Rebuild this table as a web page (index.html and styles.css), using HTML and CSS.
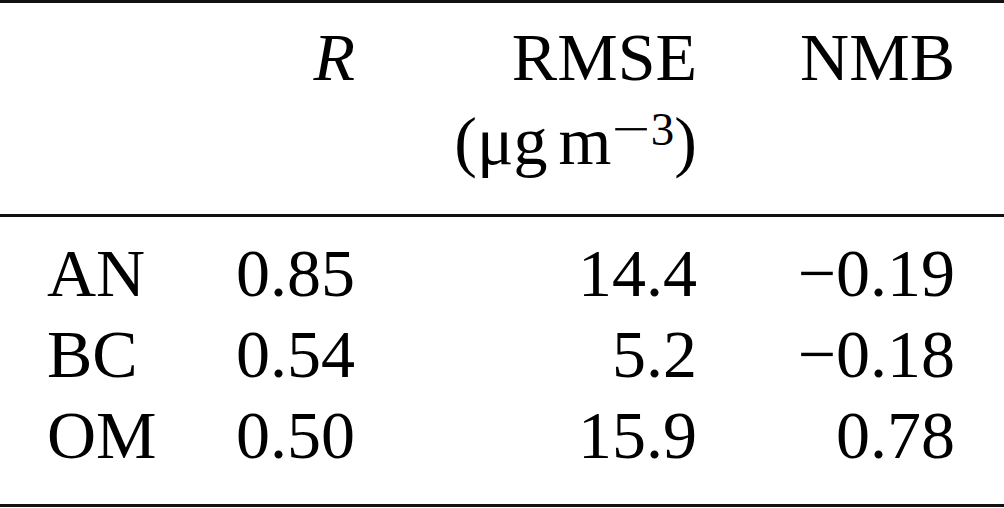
FILE: index.html
```html
<!DOCTYPE html>
<html lang="en">
<head>
    <meta charset="UTF-8">
    <meta name="viewport" content="width=device-width, initial-scale=1.0">
    <title>Evaluation statistics</title>
    <link rel="stylesheet" href="styles.css">
</head>
<body>

    <table class="stats">
        <colgroup>
            <col class="c-name">
            <col class="c-r">
            <col class="c-rmse">
            <col class="c-nmb">
        </colgroup>
        <!-- header: two lines, units under RMSE -->
        <thead>
            <tr>
                <th class="name"></th>
                <th class="num"><i>R</i></th>
                <th class="num">RMSE<br>(μg<span class="unit-gap"> </span>m<sup><span class="sup-minus">−</span>3</sup>)</th>
                <th class="num last-col">NMB</th>
            </tr>
        </thead>
        <tbody>
            <tr class="first">
                <td class="name">AN</td>
                <td class="num">0.85</td>
                <td class="num">14.4</td>
                <td class="num last-col">−0.19</td>
            </tr>
            <tr>
                <td class="name">BC</td>
                <td class="num">0.54</td>
                <td class="num">5.2</td>
                <td class="num last-col">−0.18</td>
            </tr>
            <tr class="last">
                <td class="name">OM</td>
                <td class="num">0.50</td>
                <td class="num">15.9</td>
                <td class="num last-col">0.78</td>
            </tr>
        </tbody>
    </table>

</body>
</html>
```

FILE: styles.css
```css
/* booktabs style table, Times metrics */
body { margin: 0; background: #fff; }

.stats {
    width: 1004px;
    table-layout: fixed;
    border-collapse: collapse;
    font-family: "Liberation Serif", "Times New Roman", serif;
    font-size: 68px;
    color: #000;
}
.c-name { width: 200px; }
.c-r { width: 155px; }
.c-rmse { width: 342px; }
.c-nmb { width: 307px; }

.stats th, .stats td { box-sizing: border-box; padding: 0; font-weight: normal; white-space: nowrap; }
.stats .name { text-align: left; padding-left: 47px; }
.stats .num { text-align: right; }
.stats .last-col { padding-right: 49px; }

/* rules */
.stats thead { border-top: 3px solid #111; border-bottom: 3px solid #111; }
.stats tbody { border-bottom: 3px solid #111; }

.stats thead th { line-height: 84px; padding-top: 12px; padding-bottom: 31px; vertical-align: top; }
.stats tbody td { line-height: 81px; }
.stats tr.first td { padding-top: 16px; }
.stats tr.last td { padding-bottom: 28px; }

/* units */
.unit-gap { display: inline-block; width: 11px; }
.stats sup { font-size: 47px; line-height: 0; vertical-align: 19px; }
/* tex minus is longer than the text one */
.sup-minus { display: inline-block; transform: scaleX(1.45); margin: 0 6px 0 7px; }
```
